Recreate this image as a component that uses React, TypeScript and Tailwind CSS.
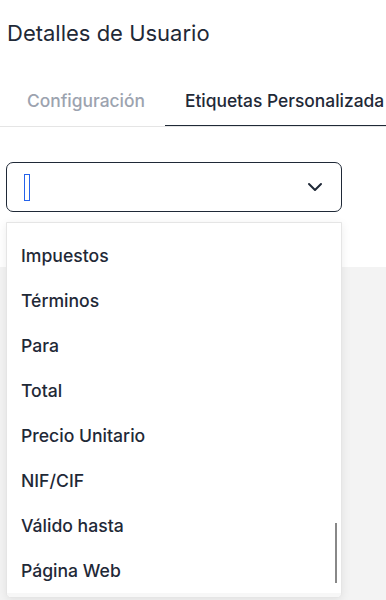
// Hooks
import { useState } from 'react';

// Types
import type { FC } from 'react';

const OPTIONS = ['Impuestos', 'Términos', 'Para', 'Total', 'Precio Unitario', 'NIF/CIF', 'Válido hasta', 'Página Web'];

const TABS = ['Configuración', 'Etiquetas Personalizada'];

const Chevron: FC = () => (
    <svg width="16" height="10" viewBox="0 0 16 10" fill="none" className="text-[#1f2937]">
        <path d="M2 2l6 6 6-6" stroke="currentColor" strokeWidth="2" strokeLinecap="round" strokeLinejoin="round" />
    </svg>
);

export default function App() {
    const [tab, setTab] = useState(1);

    return (
        <div className="flex min-h-[600px] flex-col bg-[#f3f3f3] font-['Inter',sans-serif] text-[#1f2937]">
            <div className="h-[267px] overflow-hidden bg-white">
                <h1 className="px-[7px] pt-[19px] text-[22px] leading-[28px]">Detalles de Usuario</h1>

                <div className="mt-[26px] flex overflow-hidden border-b border-[#e5e5e5] pl-[7px]">
                    {TABS.map((t, i) => (
                        <button
                            key={t}
                            onClick={() => setTab(i)}
                            className={
                                i === tab
                                    ? '-mb-px shrink-0 whitespace-nowrap border-b-2 border-[#1f2937] px-5 pt-[18px] pb-[14px] text-[17.4px] leading-5 font-medium text-[#1f2937]'
                                    : '-mb-px shrink-0 whitespace-nowrap border-b-2 border-transparent px-5 pt-[18px] pb-[14px] text-[17.4px] leading-5 font-medium text-[#9ca3af]'
                            }
                        >
                            {t}
                        </button>
                    ))}
                </div>

                <div className="relative mx-[6px] mt-[35px] w-[336px]">
                    <div className="flex h-[50px] items-center justify-between rounded-[7px] border border-[#1f2937] pr-[18px] pl-[17px]">
                        <span className="h-[27px] w-[6px] border-[1.5px] border-[#2563eb]" />
                        <Chevron />
                    </div>
                </div>
            </div>

            <div className="absolute top-[222px] left-[6px] z-10 h-[376px] w-[336px] overflow-hidden rounded-b-[5px] border border-[#e5e5e5] bg-white shadow-[0_2px_10px_rgba(0,0,0,0.08)]">
                <ul className="pt-[11px]">
                    {OPTIONS.map((o) => (
                        <li key={o} className="flex h-[45px] items-center px-[14px] text-[17.6px] font-medium text-[#1f2937]">
                            {o}
                        </li>
                    ))}
                </ul>
                <div className="absolute right-0 bottom-0 left-0 h-[4px] bg-[#f7f7f7]" />
                <div className="absolute top-[300px] right-[4px] h-[60px] w-[2px] bg-[#888888]" />
            </div>
        </div>
    );
}
